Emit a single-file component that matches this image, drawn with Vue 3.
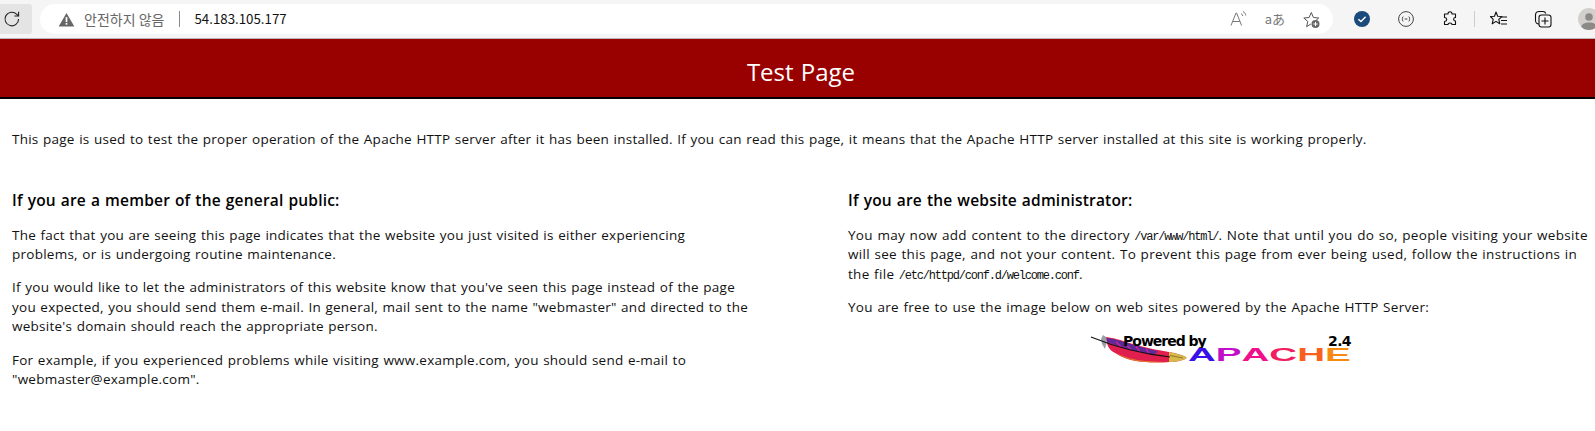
<script setup>
const apache = [
  { ch: 'A', color: '#3a10e8' },
  { ch: 'P', color: '#c010c8' },
  { ch: 'A', color: '#f0108a' },
  { ch: 'C', color: '#f02060' },
  { ch: 'H', color: '#f86020' },
  { ch: 'E', color: '#f88a10' },
]
</script>

<template>
  <div class="page">
    <div class="chrome">
      <button class="reload" aria-label="reload">
        <svg width="18" height="18" viewBox="0 0 18 18" fill="none" stroke="#222" stroke-width="1.1"><path d="M15.6 9a6.8 6.8 0 1 1-2-4.8L15.5 6"/><path d="M15.6 1.8V6h-4.2"/></svg>
      </button>
      <div class="omnibox">
        <svg class="warn" width="17" height="15" viewBox="0 0 18 15"><path d="M9 .5 17.3 15H.7z" fill="#666"/><rect x="8.100" y="5" width="1.800" height="5.200" fill="#fff"/><rect x="8.100" y="11.200" width="1.800" height="1.800" fill="#fff"/></svg>
        <span class="insecure">안전하지 않음</span>
        <span class="sep"></span>
        <span class="url">54.183.105.177</span>
        <span class="spring"></span>
        <svg class="oi read" width="18" height="18" viewBox="0 0 18 18" fill="none" stroke="#777" stroke-width="1"><path d="M1 15.500 6 3h.6l5 12.500M2.700 11.500h7.200"/><path d="M11 3.500c1 .5 1.600 1.300 1.800 2.500M13 1.500c1.500.8 2.500 2.200 2.800 4"/></svg>
        <span class="translate">aあ</span>
        <svg class="oi fav" width="20" height="20" viewBox="0 0 20 20" fill="none" stroke="#555" stroke-width="1"><path d="M12 13.800 13.200 13l2.600-2.300 1.900-1.700-5.300-.5L10.300 3.500 8.100 8.500 2.800 9l4 3.500-1.200 5.200 4.300-2.700"/><circle cx="14.500" cy="15" r="4" fill="#666" stroke="none"/><path d="M14.500 12.800v4.400M12.300 15h4.400" stroke="#fff"/></svg>
      </div>
      <div class="tools">
        <span class="tool tool-a">
          <svg width="16" height="16" viewBox="0 0 16 16"><circle cx="8" cy="8" r="8" fill="#1b4a7c"/><path d="M4.400 8.200 7 10.600l4.600-4.800" fill="none" stroke="#fff" stroke-width="1.400"/></svg>
        </span>
        <span class="tool tool-b">
          <svg width="16" height="16" viewBox="0 0 16 16" fill="none" stroke="#444" stroke-width="1"><circle cx="8" cy="8" r="7.400"/><path d="M5.300 5.600c-1 0-.6 2.400-1.300 2.400.7 0 .3 2.400 1.300 2.400M10.700 5.600c1 0 .6 2.400 1.300 2.400-.7 0-.3 2.400-1.300 2.400M6.600 8h2.800"/></svg>
        </span>
        <span class="tool tool-c">
          <svg width="16" height="16" viewBox="0 0 16 16" fill="none" stroke="#111" stroke-width="1.100"><path d="M6 3c0-3 4-3 4 0h3.500v3.500c-2.500 0-2.500 3.500 0 3.500v3.500h-3.500c0-2-4-2-4 0H2.500v-3c3-.5 3-3.500 0-4V3z" stroke-linejoin="round"/></svg>
        </span>
        <span class="divider"></span>
        <span class="tool tool-d">
          <svg width="18" height="16" viewBox="0 0 18 16" fill="none" stroke="#111" stroke-width="1.100"><path d="M6 1 7.700 5.200l4.300.3-3.200 2.800 1 4.500L6 10.400 2.200 12.800l1-4.500L0.500 5.500l4-.3z" stroke-linejoin="round"/><path d="M12 6h5M11 9.500h6M11 13h6"/></svg>
        </span>
        <span class="tool tool-e">
          <svg width="18" height="18" viewBox="0 0 18 18" fill="none" stroke="#111" stroke-width="1.100"><path d="M5 14c-2 0-3.500-1.500-3.500-3.500V5c0-2 1.500-3.500 3.500-3.500h4c1.500 0 2.500 1 2.800 2"/><rect x="5" y="5" width="12" height="12" rx="2.500"/><path d="M11 7.500v7M7.500 11h7"/></svg>
        </span>
        <span class="avatar">
          <svg width="18" height="20" viewBox="0 0 18 20"><circle cx="9" cy="7" r="3.800" fill="#8c8a87"/><path d="M1 18c0-4 4-5.500 8-5.500s8 1.500 8 5.500v2H1z" fill="#8c8a87"/></svg>
        </span>
      </div>
    </div>

    <header class="banner"><h1>Test Page</h1></header>

    <main class="content">
      <p class="lead">This page is used to test the proper operation of the Apache HTTP server after it has been installed. If you can read this page, it means that the Apache HTTP server installed at this site is working properly.</p>
      <div class="columns">
        <section class="col left">
          <h2>If you are a member of the general public:</h2>
          <p>The fact that you are seeing this page indicates that the website you just visited is either experiencing problems, or is undergoing routine maintenance.</p>
          <p>If you would like to let the administrators of this website know that you've seen this page instead of the page you expected, you should send them e-mail. In general, mail sent to the name "webmaster" and directed to the website's domain should reach the appropriate person.</p>
          <p>For example, if you experienced problems while visiting www.example.com, you should send e-mail to "webmaster@example.com".</p>
        </section>
        <section class="col right">
          <h2>If you are the website administrator:</h2>
          <p>You may now add content to the directory <code>/var/www/html/</code>. Note that until you do so, people visiting your website will see this page, and not your content. To prevent this page from ever being used, follow the instructions in the file <code>/etc/httpd/conf.d/welcome.conf</code>.</p>
          <p>You are free to use the image below on web sites powered by the Apache HTTP Server:</p>
          <div class="logo">
            <svg class="feather" width="97" height="30" viewBox="0 0 97 30">
              <path d="M16 4C26 5 36 9 46 12c11 3 22 5 33 7 7 1 13 3 17 5 1 1 0 2-2 2.500-5 2-10 2.500-15 2.500-11 .5-23 .5-33-1-8-1.500-15-4-20-7.500C18 17 16.500 11 16 4z" fill="#e01f4e"/>
              <path d="M26 20c8 4 18 7 30 8 8 .5 16 1 23 1-12 1-24 .5-33-1-8-1.500-15-4-20-8z" fill="#e8702a"/>
              <path d="M16.500 5C26 6 36 9.500 46 12.500c8 2.500 15 4 22 6l-4 3C48 19 30 14 17 9z" fill="#5c2a9c"/>
              <path d="M26 8.500 31 14M36 11l5 6M46 13.500l4 5.500M56 16l3 4" stroke="#d02090" stroke-width="1.300" fill="none"/>
              <path d="M79 19c7 1 13 3 17 5 1 1 0 2-2 2.500-5 2-10 2.500-15 2.500z" fill="#d8b848"/>
              <path d="M80 22.500 93 25" stroke="#8a7a30" stroke-width="1" fill="none"/>
              <path d="M13 2 11 6l1 5 3 5 1.500-6L16 4z" fill="#9aa0a8"/>
              <path d="M1 4C18 11 44 20 80 24" fill="none" stroke="#111" stroke-width="1.100"/>
            </svg>
            <span class="powered">Powered by</span>
            <span class="ver">2.4</span>
            <span class="apache"><span v-for="(l, i) in apache" :key="i" :style="{ color: l.color }">{{ l.ch }}</span></span>
          </div>
        </section>
      </div>
    </main>
  </div>
</template>

<style>
html, body { margin: 0; background: #fff; overflow: hidden; }
</style>

<style scoped>
.page { width: 1595px; height: 431px; font-family: "Open Sans", "Noto Sans CJK KR", sans-serif; color: #000; overflow: hidden; }
.chrome { height: 38px; background: #f5f5f5; border-bottom: 1px solid #b8b8b8; display: flex; align-items: center; }
.reload { width: 32px; height: 30px; flex: none; background: #e4e4e4; border: 0; padding: 0 0 0 3px; margin-right: 8px; display: flex; align-items: center; border-radius: 0 3px 3px 0; }
.omnibox { width: 1293px; flex: none; height: 30px; background: #fff; border-radius: 15px; display: flex; align-items: center; padding: 0 12px 0 18px; box-sizing: border-box; }
.warn { margin-right: 9px; }
.insecure { font: 14px/20px "Noto Sans CJK KR", sans-serif; color: #666; }
.sep { width: 1px; height: 16px; background: #888; margin: 0 14px 0 15px; }
.url { font: 13.3px/20px "Noto Sans CJK KR", sans-serif; color: #111; }
.spring { flex: 1; }
.translate { font: 13px/20px "Noto Sans CJK KR", sans-serif; color: #777; margin-left: 17px; margin-right: 16px; }
.tools { flex: none; display: flex; align-items: center; height: 30px; padding-left: 20px; }
.tool { display: flex; width: 18px; flex: none; justify-content: center; }
.tool-b, .tool-c { margin-left: 26px; }
.divider { width: 1px; height: 16px; background: #ccc; margin: 0 15px 0 15px; flex: none; }
.tool-e { margin-left: 26px; }
.avatar { width: 22px; height: 22px; flex: none; border-radius: 50%; background: #d2d0cd; margin-left: 26px; display: flex; justify-content: center; align-items: flex-end; overflow: hidden; }
.banner { background: #990000; height: 58px; border-bottom: 2px solid #000; display: flex; align-items: center; justify-content: center; }
h1 { margin: 0; padding: 8px 0 0 7px; color: #fff; font-size: 24px; line-height: 50px; font-weight: 400; word-spacing: 1px; }
.content { padding: 31px 3px 0 12px; font-size: 13.5px; line-height: 19.6px; color: #111; letter-spacing: .25px; word-spacing: .7px; }
p { margin: 0 0 13.5px; }
.lead { margin-bottom: 38px; }
.columns { display: flex; }
.col.left { width: 738px; margin-right: 98px; }
.col.right { flex: 1; letter-spacing: .31px; }
h2 { margin: 0 0 14px; font-size: 15.5px; line-height: 24px; font-weight: 600; color: #000; letter-spacing: .2px; }
code { font-family: "Liberation Mono", monospace; font-size: 12px; line-height: 0; letter-spacing: -1.200px; word-spacing: 0; }
.logo { position: relative; width: 261px; height: 30px; margin: 16px 0 0 242px; letter-spacing: 0; word-spacing: 0; }
.feather { position: absolute; left: 0; top: 0; }
.powered { position: absolute; left: 33px; top: 0; font: 700 14px/16px "DejaVu Sans", sans-serif; letter-spacing: -1px; color: #000; }
.ver { position: absolute; right: 0; top: 0; font: 700 14px/16px "DejaVu Sans", sans-serif; letter-spacing: -.6px; color: #000; }
.apache { position: absolute; left: 98px; top: 16px; display: flex; font: 700 18px/13px "Liberation Sans", sans-serif; transform: scaleX(2.14); transform-origin: left; }
</style>
